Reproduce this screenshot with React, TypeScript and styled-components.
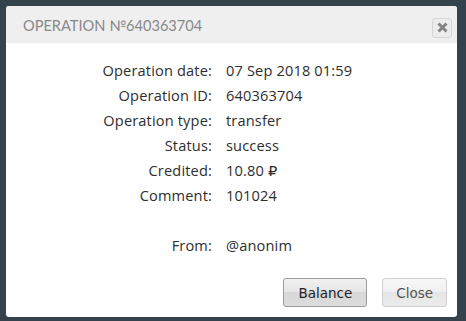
import styled, { createGlobalStyle } from "styled-components";

const GlobalStyle = createGlobalStyle`
  html, body {
    margin: 0;
    padding: 0;
    background: #34434b;
  }
  body {
    padding: 6px 0 0 6px;
    font-family: "Open Sans", "DejaVu Sans", sans-serif;
  }
`;

const Dialog = styled.div`
  width: 451px;
  height: 311px;
  background: #fff;
  border-radius: 3px;
  display: flex;
  flex-direction: column;
  overflow: hidden;
`;

const Header = styled.div`
  height: 37px;
  background: #efefef;
  display: flex;
  align-items: center;
  justify-content: space-between;
  padding: 0 5px 0 17px;
`;

const Title = styled.div`
  font-family: Lato, "DejaVu Sans", sans-serif;
  font-size: 14.6px;
  font-weight: 400;
  letter-spacing: 0;
  color: #888;
  padding-top: 1px;
`;

const CloseX = styled.button`
  width: 20px;
  height: 20px;
  margin-top: 6px;
  padding: 0;
  border: 1px solid #d6d6d6;
  border-radius: 3px;
  background: #ececec;
  display: flex;
  align-items: center;
  justify-content: center;
`;

const Body = styled.div`
  flex: 1;
  padding-top: 15px;
  display: grid;
  grid-template-columns: 206px 1fr;
  grid-auto-rows: 25px;
  column-gap: 14px;
  align-content: start;
  color: #2e2e2e;
  font-size: 14.6px;
  letter-spacing: 0.15px;
`;

const Label = styled.div`
  text-align: right;
  line-height: 25px;
`;

const Value = styled.div`
  line-height: 25px;
`;

const Spacer = styled.div`
  grid-column: 1 / 3;
`;

const Footer = styled.div`
  display: flex;
  justify-content: flex-end;
  gap: 15px;
  padding: 0 10px 10px 0;
`;

const Button = styled.button<{ $primary?: boolean }>`
  height: 29px;
  padding: 0 ${(p) => (p.$primary ? "14px" : "13px")};
  font-family: "DejaVu Sans", Verdana, sans-serif;
  font-size: 13.5px;
  color: ${(p) => (p.$primary ? "#222" : "#555")};
  border: 1px solid ${(p) => (p.$primary ? "#9a9a9a" : "#cfcfcf")};
  border-radius: 3px;
  background: ${(p) =>
    p.$primary
      ? "linear-gradient(#f2f2f2, #e4e4e4 50%, #d8d8d8 50%, #dcdcdc)"
      : "linear-gradient(#f7f7f7, #efefef 50%, #e6e6e6 50%, #ebebeb)"};
`;

const rows: [string, string][] = [
  ["Operation date:", "07 Sep 2018 01:59"],
  ["Operation ID:", "640363704"],
  ["Operation type:", "transfer"],
  ["Status:", "success"],
  ["Credited:", "10.80 \u20BD"],
  ["Comment:", "101024"],
];

export default function App() {
  return (
    <>
      <GlobalStyle />
      <Dialog>
        <Header>
          <Title>OPERATION №640363704</Title>
          <CloseX aria-label="close">
            <svg width="11" height="11" viewBox="0 0 11 11">
              <path d="M1.5 1.5 L9.5 9.5 M9.5 1.5 L1.5 9.5" stroke="#858585" strokeWidth="3" />
            </svg>
          </CloseX>
        </Header>
        <Body>
          {rows.map(([l, v]) => (
            <>
              <Label key={l}>{l}</Label>
              <Value key={l + "v"}>{v}</Value>
            </>
          ))}
          <Spacer />
          <Label>From:</Label>
          <Value>@anonim</Value>
        </Body>
        <Footer>
          <Button $primary>Balance</Button>
          <Button>Close</Button>
        </Footer>
      </Dialog>
    </>
  );
}
